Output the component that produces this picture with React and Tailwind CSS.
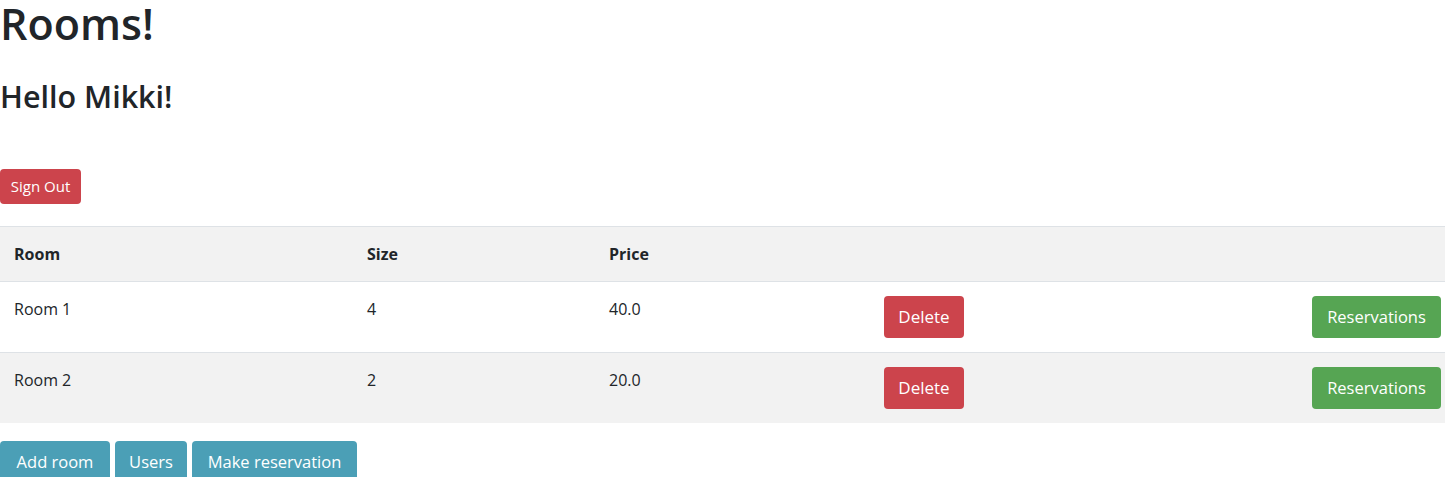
import React from "react";

const rooms = [
  { name: "Room 1", size: 4, price: "40.0" },
  { name: "Room 2", size: 2, price: "20.0" },
];

const App = () => {
  return (
    <div className="font-['Open_Sans','Liberation_Sans',sans-serif] text-[#212529] bg-white w-[1445px] h-[477px] overflow-hidden">
      <h1 className="pt-[2px] text-[43px] leading-[44px] font-semibold">Rooms!</h1>
      <h2 className="mt-[31px] text-[30.5px] leading-[38px] font-semibold">Hello Mikki!</h2>

      <button className="mt-[54px] block h-[35px] w-[81px] rounded bg-[#cc444c] text-[15px] text-white">
        Sign Out
      </button>

      <table className="mt-[22px] w-full table-fixed border-collapse text-[16px]">
        <colgroup>
          <col className="w-[353px]" />
          <col className="w-[242px]" />
          <col className="w-[275px]" />
          <col className="w-[428px]" />
          <col />
        </colgroup>
        <thead>
          <tr className="h-[55px] bg-[#f2f2f2] border-y border-[#dee2e6]">
            <th className="pl-[14px] text-left font-bold">Room</th>
            <th className="pl-[14px] text-left font-bold">Size</th>
            <th className="pl-[14px] text-left font-bold">Price</th>
            <th></th>
            <th></th>
          </tr>
        </thead>
        <tbody>
          {rooms.map((room, i) => (
            <tr
              key={room.name}
              className={
                i % 2 === 0
                  ? "bg-white border-b border-[#dee2e6]"
                  : "bg-[#f2f2f2]"
              }
            >
              <td className="pl-[14px] pt-[15px] align-top leading-[24px]">{room.name}</td>
              <td className="pl-[14px] pt-[15px] align-top leading-[24px]">{room.size}</td>
              <td className="pl-[14px] pt-[15px] align-top leading-[24px]">{room.price}</td>
              <td className="pl-[14px] py-[14px] align-top">
                <button className="h-[42px] w-[80px] rounded bg-[#cc444c] text-[17px] text-white">
                  Delete
                </button>
              </td>
              <td className="py-[14px] pr-[4px] text-right align-top">
                <button className="h-[42px] w-[129px] rounded bg-[#56a553] text-[16.5px] text-white">
                  Reservations
                </button>
              </td>
            </tr>
          ))}
        </tbody>
      </table>

      <div className="mt-[18px] flex gap-[5px]">
        <button className="h-[42px] w-[110px] rounded bg-[#4b9fb6] text-[16.5px] text-white">
          Add room
        </button>
        <button className="h-[42px] w-[72px] rounded bg-[#4b9fb6] text-[16.5px] text-white">
          Users
        </button>
        <button className="h-[42px] w-[165px] rounded bg-[#4b9fb6] text-[16.5px] text-white">
          Make reservation
        </button>
      </div>
    </div>
  );
};

export default App;
